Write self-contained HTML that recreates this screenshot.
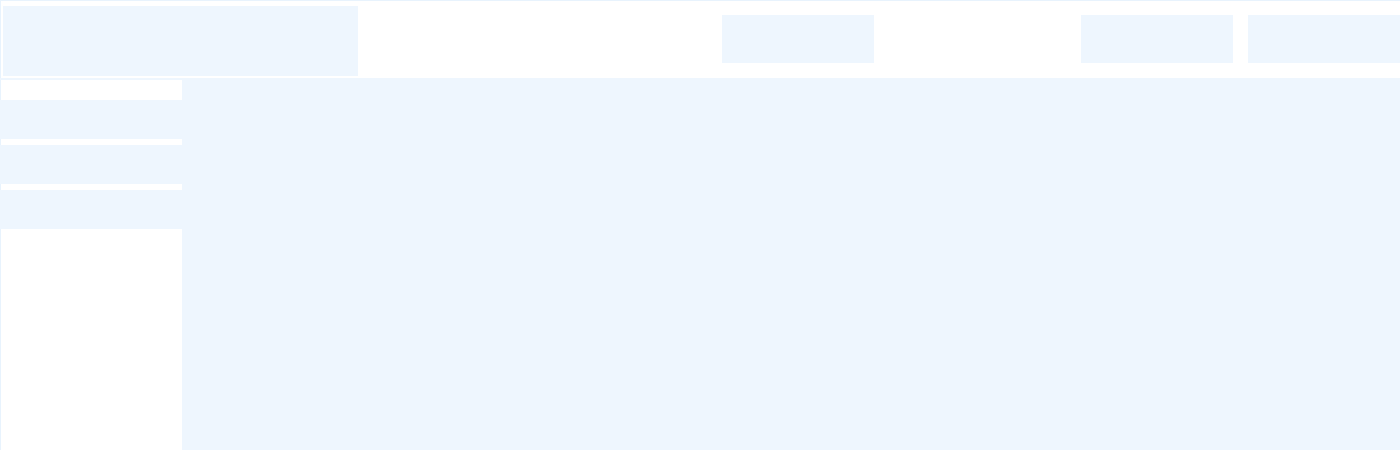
<!DOCTYPE html><html><head><style>
body{margin:0;width:1400px;height:450px;background:#fff;position:relative;overflow:hidden}
div{position:absolute;background:#eef6fe}
</style></head><body>
<div style="left:0;top:0;width:1400px;height:1px;background:#e8f3fd"></div>
<div style="left:0;top:0;width:1px;height:450px;background:#e8f3fd"></div>
<div style="left:3px;top:6px;width:355px;height:70px"></div>
<div style="left:0;top:78px;width:1400px;height:2px;background:#eef6fe"></div>
<div style="left:722px;top:15px;width:152px;height:48px"></div>
<div style="left:1081px;top:15px;width:152px;height:48px"></div>
<div style="left:1248px;top:15px;width:152px;height:48px"></div>
<div style="left:0;top:100px;width:182px;height:39px"></div>
<div style="left:0;top:145px;width:182px;height:39px"></div>
<div style="left:0;top:190px;width:182px;height:39px"></div>
<div style="left:182px;top:80px;width:1218px;height:370px"></div>
</body></html>
